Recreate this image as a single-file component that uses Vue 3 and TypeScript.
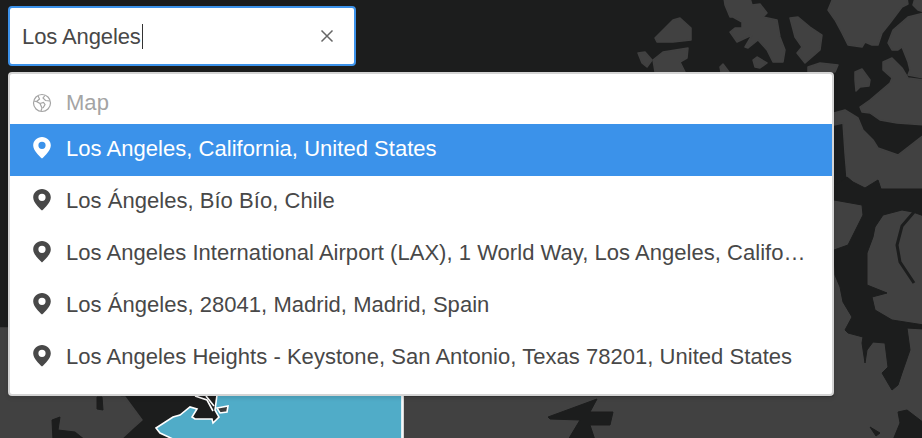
<script setup lang="ts">
const results = [
  { text: 'Los Angeles, California, United States', active: true },
  { text: 'Los Ángeles, Bío Bío, Chile', active: false },
  { text: 'Los Angeles International Airport (LAX), 1 World Way, Los Angeles, California, United States', active: false },
  { text: 'Los Ángeles, 28041, Madrid, Madrid, Spain', active: false },
  { text: 'Los Angeles Heights - Keystone, San Antonio, Texas 78201, United States', active: false },
]
</script>

<template>
  <div class="page">
    <svg class="map" width="922" height="438" viewBox="0 0 922 438" aria-hidden="true">
      <rect width="922" height="438" fill="#1c1d1d" />
      <g fill="#414141" stroke="#414141" stroke-width="1.5" stroke-linejoin="round">
        <!-- lower left land -->
        <path d="M-2 328H120V397L125 397L142 420L133 428L120 440H-2Z" />
        <!-- upper right islands -->
        <path d="M655 38L673 20L680 18L691 28L691 40L673 42L657 42Z" />
        <path d="M638 53L645 52L652 60L647 67L642 63Z" />
        <path d="M653 60L663 52L688 48L687 58L680 62L685 72H655Z" />
        <path d="M724 -2H750L752 5L760 4L767 13L763 17L777 20L780 37L785 50L783 62L773 62L767 50L758 40L748 48L745 47L752 35L737 42L730 32L735 28L742 28L742 22L733 17L730 17L725 5Z" />
        <path d="M790 18L798 17L810 27L822 35L820 50L805 63L797 53L802 47L795 37Z" />
        <path d="M753 60L757 57L767 63L760 68L755 67Z" />
        <path d="M720 67L723 64L729 72H721Z" />
        <path d="M808 67L820 63L838 65L835 72H808Z" />
        <path d="M833 -2H907L908 4L902 7L890 23L882 33L878 45L872 45L865 42L862 47L848 45L842 33L835 20L828 10Z" />
        <path d="M915 -2H924V12L918 10L913 5Z" />
        <path d="M924 13L908 17L893 30L888 43L892 50L898 50L902 47L908 62L910 70L908 75L924 78Z" />
        <path d="M855 72L862 69L870 80L869 86L860 87L856 91L855 80Z" />
        <path d="M883 62L892 58L902 68L908 78L924 80V125L897 123L880 120L870 113L862 112L860 107L870 100L890 83L892 78L883 70Z" />
        <path d="M834 113L845 110L858 118L863 130L873 140L878 148L898 155L924 135V189H881L878 180L865 188L853 182L847 177L845 153L843 123L834 125Z" />
        <!-- lower right land -->
        <path d="M834 186H924V440H834Z" />
        <path d="M404 397H834V440H404Z" />
      </g>
      <!-- dark channels over the lower right land -->
      <g fill="#1c1d1d" stroke="#1c1d1d" stroke-width="1" stroke-linejoin="round">
        <path d="M834 186L847 177L853 182L865 188L878 180L881 189H924V216L913 212L902 210L883 215L875 227L873 237L867 253L867 285L887 293L872 297L875 310L892 320L924 325V329L907 328L910 350L902 373L898 385L892 390L882 373L888 367L885 343L873 342L867 350L865 363L862 343L863 337L848 333L845 330L852 317L843 302L840 287L835 275L834 250L848 245L863 215L862 205L834 200Z" />
        <path d="M898 412L907 410L924 423V440H893L900 423Z" />
        <path d="M870 427L880 433L876 436Z" />
        <path d="M548 417L597 399L590 412L613 412L610 425L590 425L595 440H568L580 420L550 419Z" />
        <path d="M97 397H102L103 410L97 409Z" />
        <path d="M52 420L60 417L58 430L75 432L85 440H53Z" />
      </g>
      <path d="M914 212L902 226L897 245L900 262L914 283" fill="none" stroke="#1c1d1d" stroke-width="3" />
      <!-- water polygon with coast -->
      <path
        d="M217 395H402V440H175L160 433L156 428L173 417L180 415L190 407L197 409L192 417L195 419L212 419L213 423L219 417L215 410Z"
        fill="#50acc8"
        stroke="#fff"
        stroke-width="1.6"
      />
      <path d="M195 396L207 400L213 411" fill="none" stroke="#fff" stroke-width="1.6" />
      <path d="M206 396L214 406" fill="none" stroke="#fff" stroke-width="1.6" />
      <path d="M217 408L228 406L227 412L220 413Z" fill="#3c3c3c" stroke="#fff" stroke-width="1.6" />
      <path d="M403 396V438" stroke="#fff" stroke-width="1.6" />
    </svg>

    <div class="search">
      <div class="search-box">
        <span class="query">Los Angeles</span><span class="caret"></span>
        <svg class="clear" width="14" height="14" viewBox="0 0 14 14" aria-hidden="true">
          <path d="M1.5 1.5 12.5 12.5M12.5 1.5 1.5 12.5" fill="none" stroke="#666" stroke-width="1.5" />
        </svg>
      </div>

      <div class="menu">
        <div class="row heading">
          <svg class="icon" width="20" height="20" viewBox="0 0 20 20" aria-hidden="true">
            <g fill="none" stroke="#a4a4a4" stroke-width="1.2">
              <circle cx="10" cy="10" r="8.5" />
              <path d="M6 2.8 7.5 6 4.5 8.5 2 8M4.5 8.5 8 10.5 10 15 9 18M8 10.5 11.5 9.5 13 11.5 11 15M13 2.5 11 5 13.5 7.5 18 8" />
            </g>
          </svg>
          <span>Map</span>
        </div>
        <div v-for="r in results" :key="r.text" class="row item" :class="{ active: r.active }">
          <svg class="icon" width="20" height="24" viewBox="0 0 20 24" aria-hidden="true">
            <path
              fill-rule="evenodd"
              d="M10 1C5.2 1 1.2 4.6 1.2 9.4 1.2 14.2 7 19.8 10 22.4 13 19.8 18.8 14.2 18.8 9.4 18.8 4.6 14.8 1 10 1ZM10 5.7A3.6 3.6 0 1 1 10 12.9 3.6 3.6 0 0 1 10 5.7Z"
            />
          </svg>
          <span class="label">{{ r.text }}</span>
        </div>
      </div>
    </div>
  </div>
</template>

<style scoped>
.page {
  position: relative;
  width: 922px;
  height: 438px;
  overflow: hidden;
  font-family: "Liberation Sans", Arial, sans-serif;
}
.map {
  position: absolute;
  inset: 0;
}
.search {
  position: relative;
  display: flex;
  flex-direction: column;
  gap: 6px;
  padding: 6px 0 0 8px;
  width: 826px;
}
.search-box {
  display: flex;
  align-items: center;
  box-sizing: border-box;
  width: 348px;
  height: 60px;
  padding: 2px 20px 0 12px;
  background: #fff;
  border: 2px solid #3c92ea;
  border-radius: 4px;
  color: #484848;
  font-size: 22px;
}
.query {
  letter-spacing: -0.1px;
}
.caret {
  width: 1px;
  height: 25px;
  margin-top: -2px;
  margin-left: 1px;
  background: #333;
}
.clear {
  margin-left: auto;
  margin-bottom: 2px;
}
.menu {
  box-sizing: border-box;
  height: 324px;
  background: #fff;
  border: 2px solid #d4d4d4;
  border-radius: 4px;
  box-shadow: 0 2px 4px rgba(0, 0, 0, 0.12);
  font-size: 22px;
  letter-spacing: 0.035px;
  color: #484848;
}
.row {
  display: flex;
  align-items: center;
  gap: 14px;
  box-sizing: border-box;
  height: 52px;
  padding: 0 24px 2px 22px;
}
.heading {
  height: 50px;
  padding: 8px 24px 0 22px;
  color: #a4a4a4;
}
.item .icon {
  fill: #484848;
  margin-bottom: 2px;
}
.active {
  background: #3b92ea;
  color: #fff;
}
.item.active .icon {
  fill: #fff;
}
.icon {
  flex: none;
}
.label {
  overflow: hidden;
  white-space: nowrap;
  text-overflow: ellipsis;
}
</style>
